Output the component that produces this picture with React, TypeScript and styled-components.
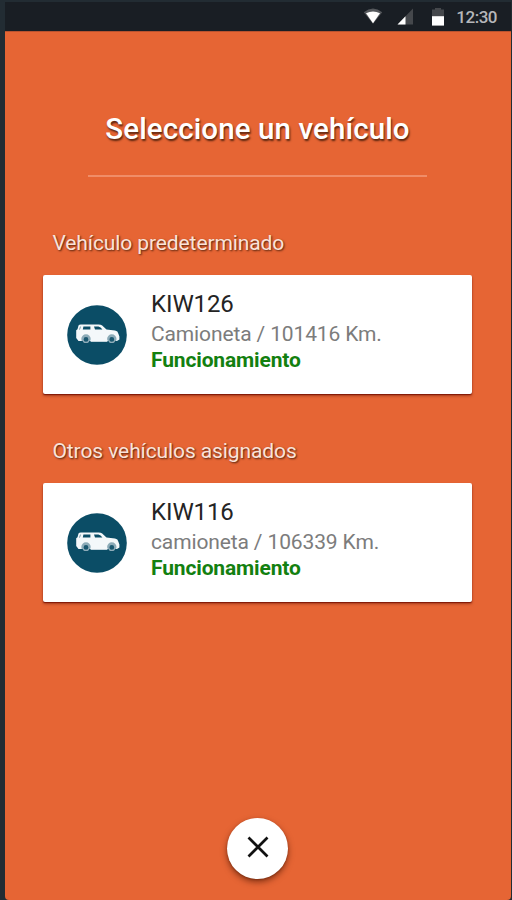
import React from "react";
import styled, { createGlobalStyle } from "styled-components";

const GlobalStyle = createGlobalStyle`
  *, *::before, *::after { box-sizing: border-box; }
  html, body { margin: 0; background: #222c33; }
  body { font-family: Roboto, "Noto Sans", sans-serif; }
`;

const Device = styled.div`
  width: 512px;
  height: 900px;
  padding: 2px 1px 0 5px;
  display: flex;
  flex-direction: column;
  background: #222c33;
  overflow: hidden;
`;

const StatusBar = styled.header`
  height: 29px;
  flex: none;
  padding: 0 14px 0 0;
  display: flex;
  align-items: center;
  justify-content: flex-end;
  background: #191e24;
  color: #b5b7ba;
  font-size: 17px;
  font-weight: 500;
  letter-spacing: -0.5px;
`;

const WifiIcon = styled.svg`
  width: 20px;
  height: 17px;
  margin-right: 14px;
`;

const SignalIcon = styled.svg`
  width: 17px;
  height: 17px;
  margin-right: 18px;
`;

const BatteryIcon = styled.svg`
  width: 12px;
  height: 18px;
  margin-right: 12px;
`;

const Screen = styled.main`
  flex: 1;
  min-height: 0;
  display: flex;
  flex-direction: column;
  padding: 75px 39px 21px 38px;
  background: #e66534;
  border-radius: 0 0 4px 4px;
  box-shadow: inset 0 1px 0 #b9532f;
`;

const Title = styled.h1`
  margin: 0;
  height: 46px;
  line-height: 46px;
  text-align: center;
  font-size: 29.5px;
  font-weight: 500;
  letter-spacing: 0.1px;
  white-space: nowrap;
  color: #fff;
  text-shadow: 1px 2px 2px rgba(40, 15, 0, 0.75);
`;

const Divider = styled.hr`
  flex: none;
  width: 339px;
  height: 2px;
  margin: 23px auto 0;
  border: 0;
  background: #f08d68;
`;

const Group = styled.section<{ $gap: number }>`
  margin-top: ${(p) => p.$gap}px;
`;

const GroupLabel = styled.h2`
  margin: 0 0 17px;
  padding-left: 9.5px;
  height: 30px;
  line-height: 30px;
  font-size: 21px;
  font-weight: 400;
  letter-spacing: -0.1px;
  white-space: nowrap;
  color: #fae3da;
  text-shadow: 1px 1px 2px rgba(40, 15, 0, 0.8);
`;

const Card = styled.article`
  height: 119px;
  padding: 0 24px;
  display: flex;
  align-items: center;
  gap: 24px;
  background: #fff;
  border-radius: 2px;
  box-shadow: 0 1px 1px rgba(120, 15, 0, 0.85), 0 2px 3px rgba(80, 10, 0, 0.4);
`;

const Avatar = styled.svg`
  flex: none;
  width: 60px;
  height: 60px;
`;

const Details = styled.div`
  height: 119px;
  padding-top: 14px;
  white-space: nowrap;
`;

const Plate = styled.div`
  height: 30px;
  line-height: 31px;
  font-size: 24px;
  letter-spacing: -0.1px;
  color: #242424;
`;

const Mileage = styled.div`
  height: 28px;
  line-height: 31px;
  font-size: 21px;
  letter-spacing: -0.13px;
  color: #7c7c7c;
`;

const Status = styled.div`
  height: 26px;
  line-height: 26px;
  font-size: 21px;
  font-weight: 700;
  letter-spacing: -0.14px;
  color: #138010;
`;

const CloseButton = styled.button`
  flex: none;
  width: 61px;
  height: 61px;
  margin: auto auto 0;
  padding: 0 0 3px;
  display: grid;
  place-items: center;
  border: 0;
  border-radius: 50%;
  background: #fff;
  box-shadow: 0 3px 6px rgba(70, 20, 0, 0.6), 0 1px 2px rgba(90, 25, 0, 0.35);
`;

const vehicles = [
  { label: "Vehículo predeterminado", plate: "KIW126", info: "Camioneta / 101416 Km.", gap: 51 },
  { label: "Otros vehículos asignados", plate: "KIW116", info: "camioneta / 106339 Km.", gap: 42 },
];

function CarAvatar() {
  return (
    <Avatar viewBox="0 0 60 60" aria-hidden="true">
      <circle cx="30" cy="30" r="29.8" fill="#0b4d66" />
      <path
        d="M11.5 20.6Q12 19.6 14 19.6H31.5Q34 19.6 35.2 20.6L39.5 24.4L48 25.6Q51 26.2 51.4 28.8L52.4 31.5V34.6L50 36H11.5L9.2 33V25.2L10.5 24.2Z"
        fill="#f4f8fa"
      />
      <path d="M16.4 21.6H23.4V24.6H15.8ZM27 21.6H31.4Q33.8 22.2 35.4 24.6H28Z" fill="#0b4d66" />
      <path d="M12.5 24.6L13.5 21.6" stroke="#7899a7" strokeWidth="1" />
      <circle cx="19" cy="34" r="4.7" fill="#0b4d66" opacity=".45" />
      <circle cx="44.8" cy="34" r="4.7" fill="#0b4d66" opacity=".45" />
      <circle cx="19" cy="34.4" r="3" fill="#1a5870" stroke="#8eacb9" strokeWidth="1.2" />
      <circle cx="44.8" cy="34.4" r="3" fill="#1a5870" stroke="#8eacb9" strokeWidth="1.2" />
      <path d="M23.6 36H40.4" stroke="#f4f8fa" strokeWidth="1.6" />
    </Avatar>
  );
}

export default function App() {
  return (
    <>
      <GlobalStyle />
      <Device>
        <StatusBar>
          <WifiIcon viewBox="0 0 20 17" aria-hidden="true">
            <path d="M.8 4.2Q10-3 19.2 4.2L10 15.8Z" fill="#55585c" />
            <path d="M3 5.2Q10 1.6 17 5.2L10 15.3Z" fill="#fff" />
          </WifiIcon>
          <SignalIcon viewBox="0 0 17 17" aria-hidden="true">
            <path d="M16 .5V16.5H.5Z" fill="#45484c" />
            <path d="M8.5 8.2V16.5H.5Z" fill="#fff" />
          </SignalIcon>
          <BatteryIcon viewBox="0 0 12 18" aria-hidden="true">
            <path d="M3 0H9V1.5H12V18H0V1.5H3Z" fill="#45484c" />
            <path d="M0 8.2H12V17.5H0Z" fill="#fff" />
          </BatteryIcon>
          <span>12:30</span>
        </StatusBar>
        <Screen>
          <Title>Seleccione un vehículo</Title>
          <Divider />
          {vehicles.map((v) => (
            <Group key={v.plate} $gap={v.gap}>
              <GroupLabel>{v.label}</GroupLabel>
              <Card>
                <CarAvatar />
                <Details>
                  <Plate>{v.plate}</Plate>
                  <Mileage>{v.info}</Mileage>
                  <Status>Funcionamiento</Status>
                </Details>
              </Card>
            </Group>
          ))}
          <CloseButton type="button" aria-label="Cerrar">
            <svg width="22" height="22" viewBox="0 0 22 22" aria-hidden="true">
              <path d="M1.5 1.5L20.5 20.5M20.5 1.5L1.5 20.5" stroke="#111" strokeWidth="2.7" />
            </svg>
          </CloseButton>
        </Screen>
      </Device>
    </>
  );
}
